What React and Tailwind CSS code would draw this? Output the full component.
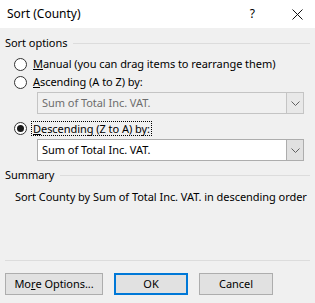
import React from 'react';

const Radio = ({ checked }) => (
  <span className="w-[13px] h-[13px] rounded-full border border-[#333333] bg-white flex items-center justify-center shrink-0">
    {checked && <span className="w-[7px] h-[7px] rounded-full bg-[#1a1a1a]" />}
  </span>
);

const Chevron = () => (
  <svg width="9" height="5" viewBox="0 0 9 5" fill="none">
    <path d="M0.5 0.5 L4.5 4.5 L8.5 0.5" stroke="#606060" strokeWidth="1" />
  </svg>
);

const Combo = ({ disabled }) => (
  <div
    className={
      'ml-[32px] mr-[6px] h-[22px] flex border ' +
      (disabled ? 'border-[#c4c4c4] bg-[#f0f0f0] text-[#6d6d6d]' : 'border-[#adadad] bg-white text-black')
    }
  >
    <div className="flex-1 flex items-center pl-[4px]">Sum of Total Inc. VAT.</div>
    <div
      className={
        'w-[17px] flex items-center justify-center border-l ' +
        (disabled ? 'border-[#c4c4c4] bg-[#e8e8e8]' : 'border-[#adadad] bg-[#e1e1e1]')
      }
    >
      <Chevron />
    </div>
  </div>
);

const Section = ({ label }) => (
  <div className="h-[16px] flex items-center gap-[6px]">
    <span>{label}</span>
    <div className="flex-1 h-px bg-[#dcdcdc] mt-[1px]" />
  </div>
);

export default function App() {
  return (
    <div
      className="w-[315px] h-[303px] bg-[#f0f0f0] flex flex-col text-[11px] tracking-[-0.05px] leading-[16px] text-black"
      style={{ fontFamily: '"Noto Sans", "Open Sans", sans-serif' }}
    >
      {/* title bar */}
      <div className="h-[28px] bg-white flex items-center pl-[7px] shrink-0 text-[12px] tracking-normal">
        <span>Sort (County)</span>
        <span className="ml-auto mr-[37px]">?</span>
        <svg width="11" height="11" viewBox="0 0 11 11" className="mr-[12px]">
          <path d="M0.5 0.5 L10.5 10.5 M10.5 0.5 L0.5 10.5" stroke="#111" strokeWidth="1" />
        </svg>
      </div>

      <div className="flex-1 flex flex-col px-[5px] pt-[7px]">
        <Section label="Sort options" />

        <div className="mt-[4px] h-[18px] flex items-center gap-[6px] pl-[9px]">
          <Radio />
          <span><u>M</u>anual (you can drag items to rearrange them)</span>
        </div>
        <div className="h-[18px] flex items-center gap-[6px] pl-[9px]">
          <Radio />
          <span><u>A</u>scending (A to Z) by:</span>
        </div>
        <div className="mt-[1px]">
          <Combo disabled />
        </div>
        <div className="mt-[5px] h-[18px] flex items-center gap-[4px] pl-[9px]">
          <Radio checked />
          <span className="border border-dotted border-black px-[1px] leading-[13px]"><u>D</u>escending (Z to A) by:</span>
        </div>
        <div className="mt-[2px]">
          <Combo />
        </div>

        <div className="mt-[6px]">
          <Section label="Summary" />
        </div>
        <div className="mt-[6px] pl-[10px] whitespace-nowrap">
          Sort County by Sum of Total Inc. VAT. in descending order
        </div>

        <div className="mt-auto h-px bg-[#dcdcdc]" />
        <div className="flex gap-[11px] mt-[12px] mb-[8px]">
          <button className="w-[98px] h-[22px] bg-[#e1e1e1] border border-[#adadad] flex items-center justify-center">
            Mo<u>r</u>e Options...
          </button>
          <button className="w-[74px] h-[22px] bg-[#e1e1e1] border-2 border-[#0078d7] flex items-center justify-center">
            OK
          </button>
          <button className="w-[74px] h-[22px] bg-[#e1e1e1] border border-[#adadad] flex items-center justify-center">
            Cancel
          </button>
        </div>
      </div>
    </div>
  );
}
